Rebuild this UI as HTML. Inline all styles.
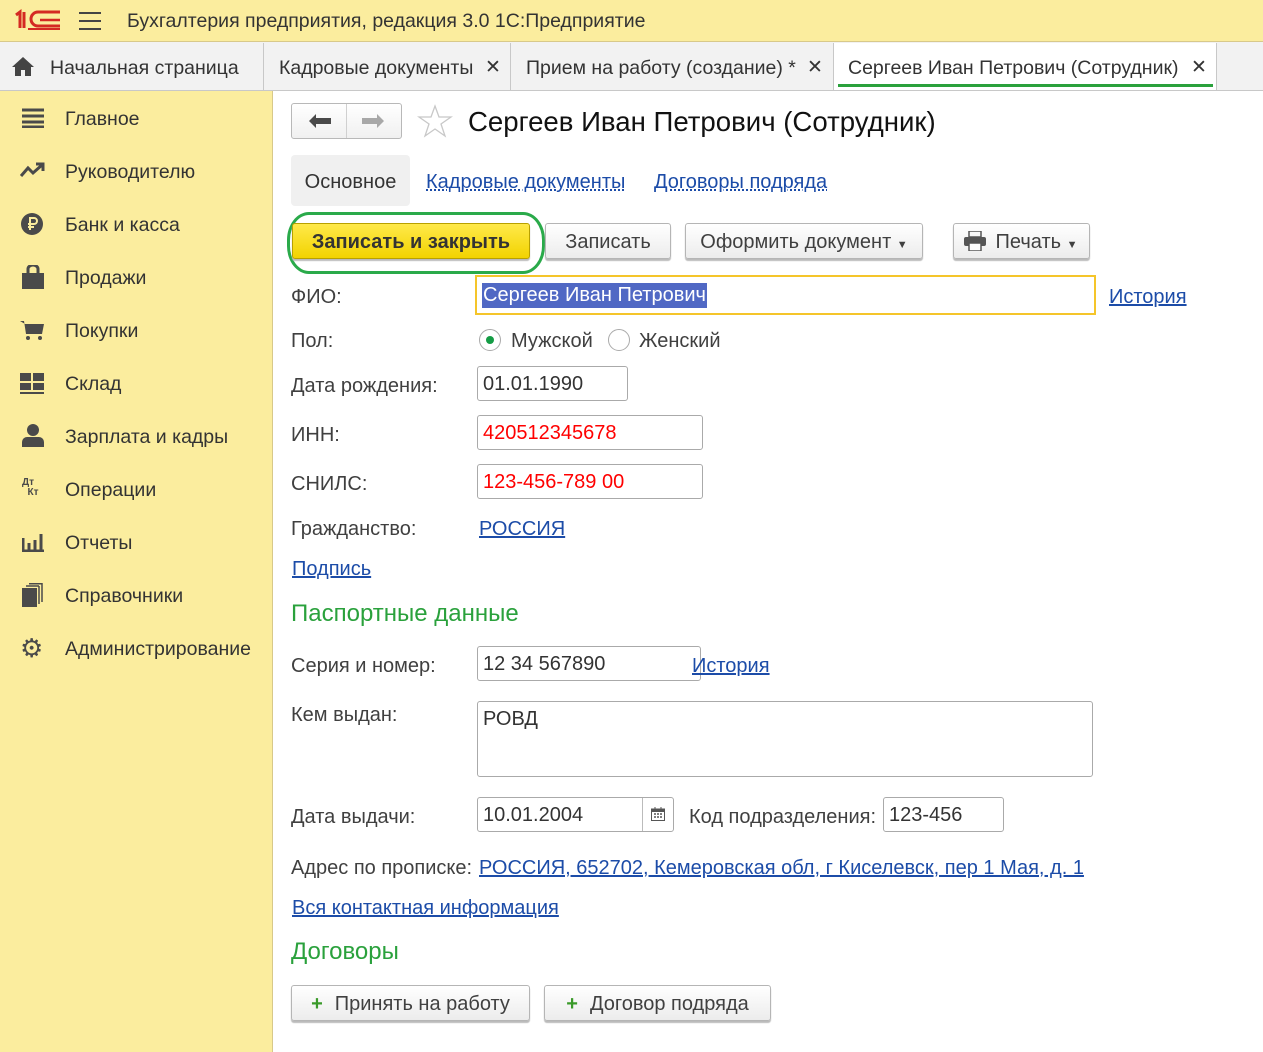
<!DOCTYPE html><html><head><meta charset="utf-8"><style>
*{margin:0;padding:0;box-sizing:border-box}
body{width:1263px;height:1052px;position:relative;overflow:hidden;background:#fff;font-family:"Liberation Sans",Arial,sans-serif;color:#404040;font-size:20px}
.a{position:absolute;white-space:nowrap}
.top{left:0;top:0;width:1263px;height:42px;background:#fbed9e;border-bottom:1px solid #d8c98a}
.tabs{left:0;top:42px;width:1263px;height:49px;background:#f2f2f2;border-bottom:1px solid #c8c8c8}
.side{left:0;top:91px;width:273px;height:961px;background:#fbed9e;border-right:1px solid #d8c98a}
.tab{top:43px;height:47px;line-height:50px;font-size:19.5px;color:#333;border-right:1px solid #c8c8c8;padding-left:15px}
.si{left:65px;font-size:19.5px;color:#333}
.lbl{left:291px;font-size:20px;color:#404040}
.inp{border:1px solid #aaa;border-radius:3px;height:35px;line-height:35px;padding-left:5px;font-size:20px;color:#333;background:#fff}
.lnk{color:#1c4ca8;text-decoration:underline}
.btn{border:1px solid #b5b5b5;border-radius:3px;background:linear-gradient(#fff,#ececec);box-shadow:0 2px 1px #bbb;height:36px;line-height:37px;text-align:center;font-size:20px;color:#404040}
.grn{color:#2aa13c;font-size:24px}
</style></head><body>
<div class="a top"></div>
<svg class="a" style="left:14px;top:9px" width="48" height="22" viewBox="0 0 48 22"><path d="M2 6 L6 3 V19 M10 3 V19" stroke="#d42a23" stroke-width="3" fill="none"/><path d="M46 17 H24 A7 7 0 0 1 24 3 H46" stroke="#d42a23" stroke-width="3" fill="none"/><path d="M46 11 H26" stroke="#d42a23" stroke-width="2.5" fill="none"/><path d="M14 20H46" stroke="#d42a23" stroke-width="2"/></svg>
<svg class="a" style="left:79px;top:11px" width="22" height="20"><path d="M0 2H22M0 10H22M0 18H22" stroke="#444" stroke-width="2"/></svg>
<div class="a" style="left:127px;top:10px;font-size:19.5px;color:#333">Бухгалтерия предприятия, редакция 3.0 1С:Предприятие</div>
<div class="a tabs"></div>
<div class="a tab" style="left:0;width:264px;padding-left:50px">Начальная страница</div>
<svg class="a" style="left:12px;top:57px" width="22" height="19"><path d="M11 0L0 10H3V19H9V13H13V19H19V10H22Z" fill="#444"/></svg>
<div class="a tab" style="left:264px;width:247px">Кадровые документы</div>
<div class="a tab" style="left:511px;width:323px">Прием на работу (создание) *</div>
<div class="a tab" style="left:834px;width:383px;background:#fff;padding-left:14px">Сергеев Иван Петрович (Сотрудник)</div>
<div class="a" style="left:485px;top:56px;font-size:19px;color:#333">✕</div>
<div class="a" style="left:807px;top:56px;font-size:19px;color:#333">✕</div>
<div class="a" style="left:1191px;top:56px;font-size:19px;color:#333">✕</div>
<div class="a" style="left:838px;top:84px;width:375px;height:3px;background:#2aa13c"></div>
<div class="a side"></div>
<svg class="a" style="left:22px;top:108px" width="22" height="20"><path d="M0 2H22M0 8H22M0 14H22M0 19H22" stroke="#4a4a4a" stroke-width="3"/></svg>
<div class="a si" style="top:108px">Главное</div>
<svg class="a" style="left:20px;top:162px" width="26" height="16"><path d="M1 14L8 6L13 11L22 3M16 2H23V9" stroke="#4a4a4a" stroke-width="3" fill="none"/></svg>
<div class="a si" style="top:161px">Руководителю</div>
<svg class="a" style="left:21px;top:213px" width="22" height="22"><circle cx="11" cy="11" r="11" fill="#4a4a4a"/><path d="M9 17V5H13A3 3 0 0 1 13 11H7M7 14H13" stroke="#fbed9e" stroke-width="2" fill="none"/></svg>
<div class="a si" style="top:214px">Банк и касса</div>
<svg class="a" style="left:22px;top:265px" width="22" height="24"><path d="M0 8H22V24H0Z" fill="#4a4a4a"/><path d="M6 10V4A5 4 0 0 1 16 4V10" stroke="#4a4a4a" stroke-width="3" fill="none"/></svg>
<div class="a si" style="top:267px">Продажи</div>
<svg class="a" style="left:20px;top:320px" width="24" height="22"><path d="M0 1H4L6 14H22L24 4H5Z" fill="#4a4a4a"/><circle cx="8" cy="18" r="2" fill="#4a4a4a"/><circle cx="20" cy="18" r="2" fill="#4a4a4a"/></svg>
<div class="a si" style="top:320px">Покупки</div>
<svg class="a" style="left:20px;top:373px" width="24" height="21"><rect x="0" y="0" width="11" height="8" fill="#4a4a4a"/><rect x="13" y="0" width="11" height="8" fill="#4a4a4a"/><rect x="0" y="10" width="11" height="7" fill="#4a4a4a"/><rect x="13" y="10" width="11" height="7" fill="#4a4a4a"/><rect x="0" y="19" width="24" height="2" fill="#4a4a4a"/></svg>
<div class="a si" style="top:373px">Склад</div>
<svg class="a" style="left:22px;top:424px" width="22" height="23"><circle cx="11" cy="6" r="6" fill="#4a4a4a"/><path d="M0 23V18A5 5 0 0 1 5 13H17A5 5 0 0 1 22 18V23Z" fill="#4a4a4a"/></svg>
<div class="a si" style="top:426px">Зарплата и кадры</div>
<div class="a" style="left:22px;top:478px;font-size:10px;font-weight:bold;color:#4a4a4a;line-height:10px">Дт<br>&nbsp;&nbsp;Кт</div>
<div class="a si" style="top:479px">Операции</div>
<svg class="a" style="left:22px;top:534px" width="22" height="18"><path d="M1 4V17M7 9V17M13 6V17M19 0V17M0 17H22" stroke="#4a4a4a" stroke-width="3"/></svg>
<div class="a si" style="top:532px">Отчеты</div>
<svg class="a" style="left:22px;top:583px" width="22" height="24"><rect x="0" y="5" width="15" height="19" fill="#4a4a4a"/><path d="M17 3V21M20 0V19" stroke="#4a4a4a" stroke-width="1.5"/><path d="M4 3H17M7 0.8H20" stroke="#4a4a4a" stroke-width="1.5"/></svg>
<div class="a si" style="top:585px">Справочники</div>
<div class="a" style="left:20px;top:633px;font-size:26px;color:#4a4a4a">⚙</div>
<div class="a si" style="top:638px">Администрирование</div>

<div class="a" style="left:291px;top:103px;width:111px;height:36px;border:1px solid #b8b8b8;border-radius:3px;background:linear-gradient(#fff,#f0f0f0)"></div>
<div class="a" style="left:346px;top:104px;width:1px;height:34px;background:#d0d0d0"></div>
<svg class="a" style="left:309px;top:114px" width="22" height="14"><path d="M0 7L7 0V4H22V10H7V14Z" fill="#4a4a4a"/></svg>
<svg class="a" style="left:362px;top:114px" width="22" height="14"><path d="M22 7L15 0V4H0V10H15V14Z" fill="#a8a8a8"/></svg>
<svg class="a" style="left:417px;top:104px" width="36" height="34"><path d="M18 2L22 13H34L24 20L28 32L18 25L8 32L12 20L2 13H14Z" fill="none" stroke="#c8c8c8" stroke-width="1.3"/></svg>
<div class="a" style="left:468px;top:106px;font-size:27.6px;color:#111">Сергеев Иван Петрович (Сотрудник)</div>
<div class="a" style="left:291px;top:155px;width:119px;height:51px;background:#f0f0f0;border-radius:4px;line-height:54px;text-align:center;color:#333">Основное</div>
<div class="a lnk" style="left:426px;top:171px;text-decoration:underline dotted">Кадровые документы</div>
<div class="a lnk" style="left:654px;top:171px;text-decoration:underline dotted">Договоры подряда</div>

<div class="a" style="left:287px;top:212px;width:258px;height:62px;border:3px solid #2aaa4a;border-radius:22px/28px"></div>
<div class="a btn" style="left:292px;top:223px;width:238px;background:linear-gradient(#ffe94a,#f2d300);border-color:#b8a000;font-weight:bold;color:#333">Записать и закрыть</div>
<div class="a btn" style="left:545px;top:223px;width:126px">Записать</div>
<div class="a btn" style="left:685px;top:223px;width:238px">Оформить документ <span style="font-size:11px">▼</span></div>
<div class="a btn" style="left:953px;top:223px;width:137px;padding-left:30px">Печать <span style="font-size:11px">▼</span></div>
<svg class="a" style="left:964px;top:231px" width="22" height="20"><rect x="5" y="0" width="12" height="6" fill="none" stroke="#555" stroke-width="1.5"/><rect x="0" y="6" width="22" height="9" rx="2" fill="#555"/><rect x="5" y="12" width="12" height="8" fill="#fff" stroke="#555" stroke-width="1.5"/></svg>

<div class="a lbl" style="top:286px">ФИО:</div>
<div class="a" style="left:475px;top:275px;width:621px;height:40px;border:2px solid #f5c52a"></div>
<div class="a" style="left:482px;top:283px;background:#5068c4;color:#fff;padding:0 1px;line-height:25px">Сергеев Иван Петрович</div>
<div class="a lnk" style="left:1109px;top:286px">История</div>
<div class="a lbl" style="top:330px">Пол:</div>
<div class="a" style="left:479px;top:329px;width:22px;height:22px;border:1px solid #aaa;border-radius:50%"></div>
<div class="a" style="left:486px;top:336px;width:8px;height:8px;background:#149c45;border-radius:50%"></div>
<div class="a" style="left:511px;top:330px">Мужской</div>
<div class="a" style="left:608px;top:329px;width:22px;height:22px;border:1px solid #aaa;border-radius:50%"></div>
<div class="a" style="left:639px;top:330px">Женский</div>
<div class="a lbl" style="top:375px">Дата рождения:</div>
<div class="a inp" style="left:477px;top:366px;width:151px">01.01.1990</div>
<div class="a lbl" style="top:424px">ИНН:</div>
<div class="a inp" style="left:477px;top:415px;width:226px;color:#f00">420512345678</div>
<div class="a lbl" style="top:473px">СНИЛС:</div>
<div class="a inp" style="left:477px;top:464px;width:226px;color:#f00">123-456-789 00</div>
<div class="a lbl" style="top:518px">Гражданство:</div>
<div class="a lnk" style="left:479px;top:518px">РОССИЯ</div>
<div class="a lnk" style="left:292px;top:558px">Подпись</div>
<div class="a grn" style="left:291px;top:600px">Паспортные данные</div>
<div class="a lbl" style="top:655px">Серия и номер:</div>
<div class="a inp" style="left:477px;top:646px;width:224px">12 34 567890</div>
<div class="a lnk" style="left:692px;top:655px">История</div>
<div class="a lbl" style="top:704px">Кем выдан:</div>
<div class="a inp" style="left:477px;top:701px;width:616px;height:76px;line-height:34px">РОВД</div>
<div class="a lbl" style="top:806px">Дата выдачи:</div>
<div class="a inp" style="left:477px;top:797px;width:197px">10.01.2004</div>
<div class="a" style="left:642px;top:798px;width:1px;height:33px;background:#bbb"></div>
<svg class="a" style="left:651px;top:807px" width="14" height="14"><rect x="0.5" y="2" width="13" height="11.5" fill="none" stroke="#555"/><rect x="0" y="2" width="14" height="3" fill="#555"/><path d="M3 7H5M6 7H8M9 7H11M3 10H5M6 10H8M9 10H11" stroke="#555" stroke-width="1.5"/><path d="M4 0V3M10 0V3" stroke="#555"/></svg>
<div class="a" style="left:689px;top:806px">Код подразделения:</div>
<div class="a inp" style="left:883px;top:797px;width:121px">123-456</div>
<div class="a lbl" style="top:857px">Адрес по прописке:</div>
<div class="a lnk" style="left:479px;top:857px">РОССИЯ, 652702, Кемеровская обл, г Киселевск, пер 1 Мая, д. 1</div>
<div class="a lnk" style="left:292px;top:897px">Вся контактная информация</div>
<div class="a grn" style="left:291px;top:938px">Договоры</div>
<div class="a btn" style="left:291px;top:985px;width:239px"><span style="color:#3a9a2a;font-weight:bold;margin-right:12px">+</span>Принять на работу</div>
<div class="a btn" style="left:544px;top:985px;width:227px"><span style="color:#3a9a2a;font-weight:bold;margin-right:12px">+</span>Договор подряда</div>
</body></html>
